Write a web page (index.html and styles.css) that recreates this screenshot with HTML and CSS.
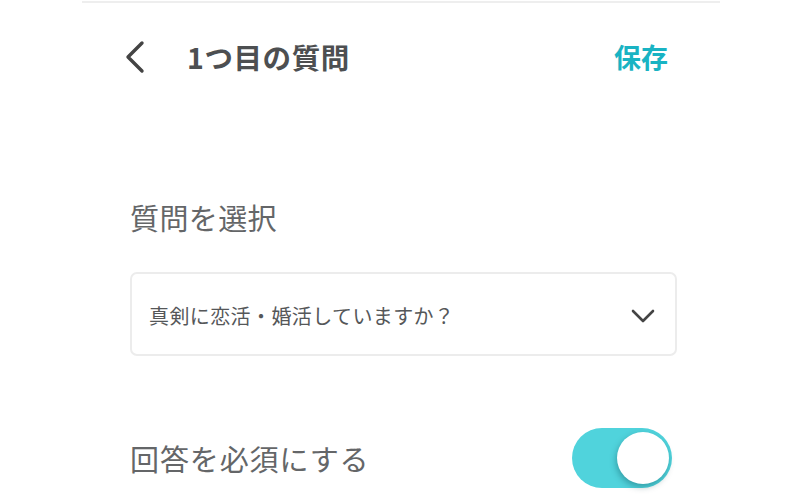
FILE: index.html
```html
<!DOCTYPE html>
<html lang="ja">
<head>
<meta charset="utf-8">
<title>1つ目の質問</title>
<link rel="stylesheet" href="styles.css">
</head>
<body>
<div class="screen">
  <div class="top-rule"></div>
  <header class="nav">
    <button class="back" aria-label="戻る">
      <svg width="22" height="34" viewBox="0 0 22 34"><path d="M18 3 L4 17 L18 31" fill="none" stroke="#444" stroke-width="3.4" stroke-linecap="round" stroke-linejoin="round"/></svg>
    </button>
    <h1 class="title">1つ目の質問</h1>
    <button class="save">保存</button>
  </header>

  <main class="form">
    <p class="label">質問を選択</p>
    <div class="select">
      <span class="select-text">真剣に恋活・婚活していますか？</span>
      <svg class="caret" width="24" height="14" viewBox="0 0 24 14"><path d="M2 2 L12 12 L22 2" fill="none" stroke="#444" stroke-width="2.6" stroke-linecap="round" stroke-linejoin="round"/></svg>
    </div>

    <div class="toggle-row">
      <span class="label wide">回答を必須にする</span>
      <div class="switch on"><span class="knob"></span></div>
    </div>
  </main>
</div>
</body>
</html>
```

FILE: styles.css
```css
* { box-sizing: border-box; }

html, body {
  margin: 0;
  padding: 0;
  background: #fff;
}

body {
  font-family: "Noto Sans CJK JP", "Noto Sans", sans-serif;
  width: 800px;
  height: 500px;
  overflow: hidden;
}

.screen {
  width: 800px;
}

.top-rule {
  margin: 1px 0 0 82px;
  width: 638px;
  height: 2px;
  background: #eeeeee;
}

.nav {
  display: flex;
  align-items: center;
  height: 106px;
  padding: 0 132px 0 124px;
}

.back {
  border: 0;
  background: none;
  padding: 0;
  width: 22px;
  height: 34px;
  display: flex;
  margin-right: 41px;
  margin-top: 2px;
}

.title {
  flex: 1;
  margin: 0;
  font-size: 28.5px;
  font-weight: 700;
  color: #4d4f51;
  letter-spacing: 0.6px;
}

.save {
  border: 0;
  background: none;
  padding: 0;
  font-family: inherit;
  font-size: 27px;
  font-weight: 700;
  color: #19b3c3;
}

.form {
  padding: 88px 123px 0 130px;
}

.label {
  margin: 0;
  font-size: 29px;
  line-height: 40px;
  color: #646668;
  letter-spacing: 0.4px;
}

.label.wide {
  letter-spacing: 0.9px;
}

.select {
  margin-top: 35px;
  height: 84px;
  border: 2px solid #ececec;
  border-radius: 7px;
  display: flex;
  align-items: center;
  justify-content: space-between;
  padding: 0 20px 0 17px;
}

.select-text {
  font-size: 20px;
  color: #555759;
  letter-spacing: 0.4px;
  margin-top: 2px;
}

.caret {
  margin-top: 4px;
}

.toggle-row {
  margin-top: 72px;
  display: flex;
  align-items: center;
  justify-content: space-between;
}

.switch {
  position: relative;
  width: 100px;
  height: 60px;
  border-radius: 30px;
  background: #e2e2e2;
  margin-right: 5px;
}

.switch.on {
  background: #50d3dc;
}

.knob {
  position: absolute;
  top: 4px;
  right: 3px;
  width: 52px;
  height: 52px;
  border-radius: 50%;
  background: #fff;
  box-shadow: -1px 3px 6px rgba(0, 60, 70, 0.35);
}
```
